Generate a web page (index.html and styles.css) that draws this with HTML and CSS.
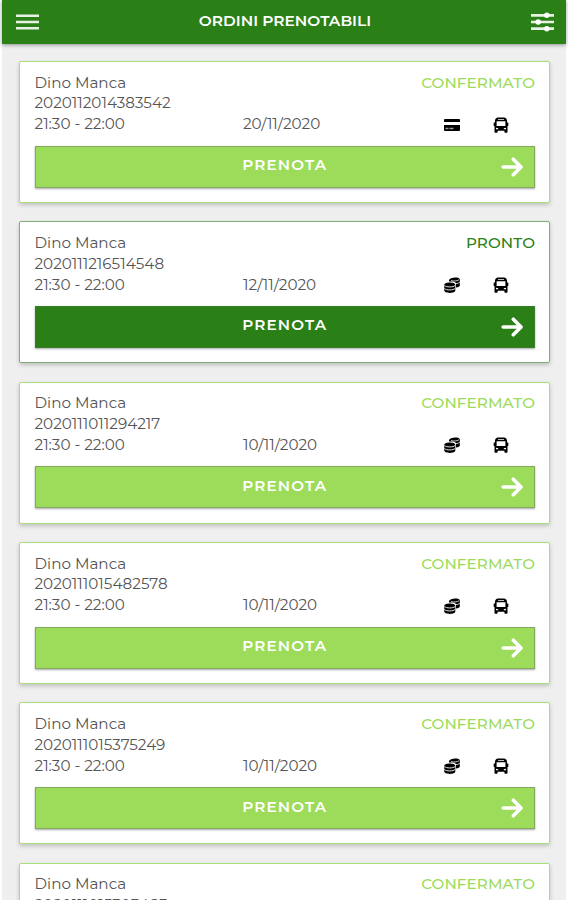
FILE: index.html
```html
<!DOCTYPE html>
<html lang="it">
<head>
    <meta charset="UTF-8">
    <meta name="viewport" content="width=device-width, initial-scale=1.0">
    <title>Ordini prenotabili</title>
    <link rel="stylesheet" href="styles.css">
</head>
<body>
    <svg class="sprite" width="0" height="0">
        <symbol id="card" viewBox="0 0 16 14">
            <path d="M1 1h14q1 0 1 1v2H0V2q0-1 1-1z"/>
            <path d="M0 7h16v5q0 1-1 1H1q-1 0-1-1z"/>
            <path d="M1.500 10.500h3M5.500 10.500h4" stroke="#999" stroke-width="1.300"/>
        </symbol>
        <symbol id="coins" viewBox="0 0 16 16">
            <path d="M5 3.500C5 .2 15.800-.8 15.800 2.500v6c0 1-1.500 1.700-3.800 2V6C10.500 4.500 7.500 4.200 5 4.500z"/>
            <path d="M7 3.500c2 1 6.500.6 8-.8M12 6.700q2.200-.3 3.800-1.300" fill="none" stroke="#fff" stroke-width=".8"/>
            <path d="M.3 8c0-3.200 11-3.200 11 0v5.500c0 3.200-11 3.200-11 0z"/>
            <path d="M.5 8.500c1.500 1.900 9 1.900 10.500 0M.5 11.500c1.500 1.900 9 1.900 10.500 0" fill="none" stroke="#fff" stroke-width=".9"/>
        </symbol>
        <symbol id="bus" viewBox="0 0 16 16">
            <path fill-rule="evenodd" d="M4.500.5h7Q14 1 14 4v1.500h1.300V9H14.500v6q0 .8-.8.8h-1.500q-.8 0-.8-.8v-1.200H4.600V15q0 .8-.8.8H2.300q-.8 0-.8-.8V9H.7V5.500H2V4Q2 1 4.500.5zM5 2v.8h6V2zM3.600 4.300V9h8.800V4.300zM3 10.700v1.500h2.200v-1zM13 10.700l-2.200.5v1H13z"/>
        </symbol>
        <symbol id="arrow" viewBox="0 0 20 20">
            <path d="M2 10h15.500M11.200 3l7 7-7 7" fill="none" stroke="#fff" stroke-width="3.300" stroke-linecap="round" stroke-linejoin="round"/>
        </symbol>
    </svg>

    <div class="navbar">
        <svg class="menu" viewBox="0 0 24 16">
            <path d="M0 1.500h24M0 8h24M0 14.500h24"/>
        </svg>
        <h1>ORDINI PRENOTABILI</h1>
        <svg class="filters" viewBox="0 0 24 22">
            <path d="M0 4h24M0 11h24M0 18h24"/>
            <circle cx="16.500" cy="4" r="2.900"/>
            <circle cx="7.500" cy="11" r="2.900"/>
            <circle cx="16.500" cy="18" r="2.900"/>
        </svg>
    </div>

    <div class="orders">
        <div class="order">
            <div class="row"><span>Dino Manca</span><span class="status">CONFERMATO</span></div>
            <div>2020112014383542</div>
            <div class="details">
                <span>21:30 - 22:00</span>
                <span>20/11/2020</span>
                <svg class="icon"><use href="#card"/></svg>
                <svg class="icon"><use href="#bus"/></svg>
            </div>
            <button><span>PRENOTA</span><svg><use href="#arrow"/></svg></button>
        </div>

        <div class="order ready">
            <div class="row"><span>Dino Manca</span><span class="status">PRONTO</span></div>
            <div>2020111216514548</div>
            <div class="details">
                <span>21:30 - 22:00</span>
                <span>12/11/2020</span>
                <svg class="icon"><use href="#coins"/></svg>
                <svg class="icon"><use href="#bus"/></svg>
            </div>
            <button><span>PRENOTA</span><svg><use href="#arrow"/></svg></button>
        </div>

        <div class="order">
            <div class="row"><span>Dino Manca</span><span class="status">CONFERMATO</span></div>
            <div>2020111011294217</div>
            <div class="details">
                <span>21:30 - 22:00</span>
                <span>10/11/2020</span>
                <svg class="icon"><use href="#coins"/></svg>
                <svg class="icon"><use href="#bus"/></svg>
            </div>
            <button><span>PRENOTA</span><svg><use href="#arrow"/></svg></button>
        </div>

        <div class="order">
            <div class="row"><span>Dino Manca</span><span class="status">CONFERMATO</span></div>
            <div>2020111015482578</div>
            <div class="details">
                <span>21:30 - 22:00</span>
                <span>10/11/2020</span>
                <svg class="icon"><use href="#coins"/></svg>
                <svg class="icon"><use href="#bus"/></svg>
            </div>
            <button><span>PRENOTA</span><svg><use href="#arrow"/></svg></button>
        </div>

        <div class="order">
            <div class="row"><span>Dino Manca</span><span class="status">CONFERMATO</span></div>
            <div>2020111015375249</div>
            <div class="details">
                <span>21:30 - 22:00</span>
                <span>10/11/2020</span>
                <svg class="icon"><use href="#coins"/></svg>
                <svg class="icon"><use href="#bus"/></svg>
            </div>
            <button><span>PRENOTA</span><svg><use href="#arrow"/></svg></button>
        </div>

        <div class="order">
            <div class="row"><span>Dino Manca</span><span class="status">CONFERMATO</span></div>
            <div>2020111015303483</div>
        </div>
    </div>
</body>
</html>
```
FILE: styles.css
```css
* {
    box-sizing: border-box;
}
body {
    margin: 0;
    padding: 0 2px;
    height: 900px;
    overflow: hidden;
    background: #fff;
    color: #555;
    font-family: Montserrat, Inter, sans-serif;
    font-size: 15.2px;
}
.sprite {
    display: block;
}
.navbar {
    display: flex;
    justify-content: space-between;
    align-items: center;
    height: 44px;
    padding: 0 12px 0 14px;
    background: #2a7f17;
    box-shadow: 0 1px 4px rgba(0, 0, 0, 0.4);
    position: relative;
}
.navbar h1 {
    margin: 0;
    padding-bottom: 3px;
    color: #fff;
    font-size: 15.4px;
    font-weight: 600;
}
.navbar svg {
    width: 23px;
    fill: #fff;
    stroke: #e6f2e3;
    stroke-width: 2.8;
}
.navbar circle {
    stroke: none;
}
.menu {
    height: 16px;
}
.filters {
    height: 22px;
}
.orders {
    height: 856px;
    padding: 17px 16px 0 17px;
    background: #efefef;
    overflow: hidden;
}
.order {
    height: 142px;
    margin-bottom: 18.35px;
    padding: 10.6px 14px 0 14.5px;
    background: #fff;
    border: 1px solid #aadf7c;
    border-radius: 2px;
    box-shadow: 0 2px 4px rgba(0, 0, 0, 0.2);
    line-height: 20.8px;
}
.row {
    display: flex;
    justify-content: space-between;
}
.status {
    color: #9ddc5b;
    font-weight: 500;
    letter-spacing: 0.1px;
}
.details {
    display: grid;
    grid-template-columns: 208.5px 200.5px 49px 41px;
    align-items: center;
}
.icon {
    width: 16px;
    height: 16px;
}
button {
    display: grid;
    grid-template-columns: 1fr auto 1fr;
    align-items: center;
    width: 100%;
    height: 42px;
    margin-top: 10.8px;
    padding: 0 11px;
    background: #9ddb5a;
    border: 1px solid #85a861;
    color: #fff;
    font: inherit;
    font-weight: 600;
    letter-spacing: 1.1px;
    box-shadow: 0 1px 2px rgba(0, 0, 0, 0.35);
}
button span {
    grid-column: 2;
    padding-bottom: 2.5px;
}
button svg {
    width: 22px;
    height: 22px;
    justify-self: end;
}
.ready {
    border-color: #7fac77;
}
.ready .status {
    color: #2a7f17;
}
.ready button {
    background: #2a7f17;
    border-color: #3a7c2c;
}
```
